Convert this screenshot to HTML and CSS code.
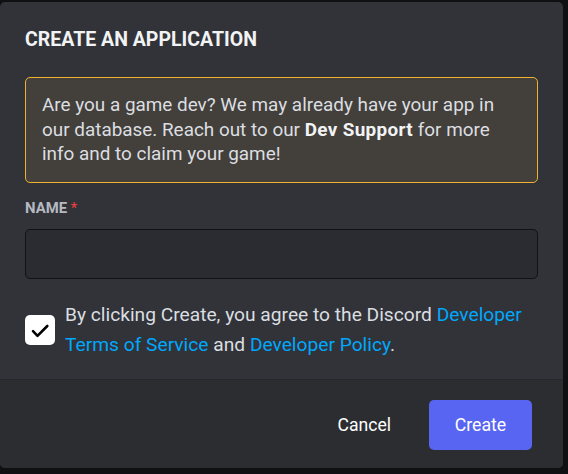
FILE: index.html
```html
<!DOCTYPE html>
<html lang="en">
<head>
<meta charset="utf-8">
<title>Create an Application</title>
<link rel="stylesheet" href="styles.css">
</head>
<body>
<div class="modal">
  <div class="header">
    <h1 class="title">CREATE AN APPLICATION</h1>
  </div>
  <div class="content">
    <div class="notice"><span>Are you a game dev? We may already have your app in</span> <span>our database. Reach out to our</span> <strong>Dev Support</strong> <span>for more</span> <span>info and to claim your game!</span></div>
    <label class="label" for="name">NAME <span class="req">*</span></label>
    <input class="input" id="name" type="text">
    <div class="agree">
      <span class="checkbox">
        <svg width="30" height="30" viewBox="0 0 30 30" aria-hidden="true"><polyline points="8,16.2 12.5,20.8 22.3,11" fill="none" stroke="#000" stroke-width="2.6" stroke-linecap="round" stroke-linejoin="round"/></svg>
      </span>
      <p class="agree-text"><span>By clicking Create, you agree to the Discord</span> <a href="#" class="link"><span>Developer</span> <span>Terms of Service</span></a> <span>and</span> <a href="#" class="link">Developer Policy</a>.</p>
    </div>
  </div>
  <div class="footer">
    <button class="btn-cancel" type="button">Cancel</button>
    <button class="btn-create" type="button">Create</button>
  </div>
</div>
</body>
</html>
```
FILE: styles.css
```css
html, body {
  margin: 0;
  padding: 0;
  background: #0f1012;
  height: 100%;
  overflow: hidden;
}
body {
  padding-top: 2px;
  box-sizing: border-box;
  font-family: Roboto, "Noto Sans", sans-serif;
}
.modal {
  width: 563px;
  height: 466px;
  background: #313338;
  border-radius: 5px;
  overflow: hidden;
  display: flex;
  flex-direction: column;
}
.header {
  padding: 24.8px 25px 0;
}
.title {
  margin: 0;
  font-size: 19.5px;
  line-height: 25px;
  font-weight: 700;
  color: #f2f3f5;
}
.content {
  padding: 25.2px 25px 0;
  display: flex;
  flex-direction: column;
}
.notice {
  border: 1px solid #f0b232;
  background: #433f3a;
  border-radius: 5px;
  padding: 15.5px 16px;
  color: #dbdee1;
  font-size: 18.9px;
  line-height: 24.5px;
}
.notice strong {
  color: #f2f3f5;
  font-weight: 700;
  letter-spacing: 0.35px;
}
.label {
  margin-top: 16px;
  font-size: 14.9px;
  line-height: 18px;
  font-weight: 700;
  color: #b5bac1;
}
.req {
  color: #f23f42;
  font-weight: 400;
}
.input {
  margin: 11.4px 0 0;
  height: 50px;
  box-sizing: border-box;
  border: 1px solid #111214;
  border-radius: 5px;
  background: #2b2c31;
  outline: none;
  padding: 0 12px;
  color: #dbdee1;
  font: inherit;
}
.agree {
  margin-top: 21.5px;
  display: flex;
  align-items: center;
  gap: 10px;
}
.checkbox {
  flex: none;
  width: 30px;
  height: 30px;
  border-radius: 5px;
  background: #ffffff;
  display: flex;
}
.agree-text {
  margin: 0;
  font-size: 19.2px;
  line-height: 30px;
  color: #dbdee1;
}
.link {
  color: #00a8fc;
  text-decoration: none;
}
.footer {
  margin-top: auto;
  background: #2b2d31;
  border-top: 1px solid #26272b;
  padding: 20px 31px 18px 25px;
  display: flex;
  justify-content: flex-end;
  align-items: center;
}
.btn-cancel {
  background: none;
  border: none;
  padding: 0 20px;
  margin-right: 18px;
  height: 50px;
  color: #ffffff;
  font-family: inherit;
  font-size: 17.6px;
  font-weight: 400;
}
.btn-create {
  background: #5865f2;
  border: none;
  border-radius: 5px;
  width: 103px;
  height: 50px;
  color: #ffffff;
  font-family: inherit;
  font-size: 17.7px;
  font-weight: 400;
}
```
